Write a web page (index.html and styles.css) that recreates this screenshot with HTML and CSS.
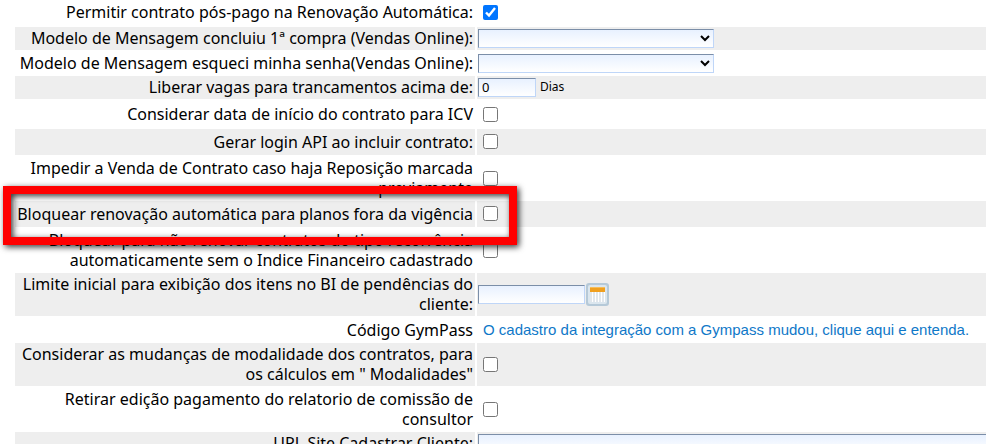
FILE: index.html
```
<!DOCTYPE html>
<html lang="pt-BR">

<head>
    <meta charset="UTF-8">
    <meta name="viewport" content="width=device-width, initial-scale=1.0">
    <title>Configurações</title>
    <link rel="stylesheet" href="styles.css">
</head>

<body>
    <form class="config-form">
        <table class="config-table">
            <tr class="check-row">
                <td class="label-cell"><label for="pos-pago">Permitir contrato pós-pago na Renovação Automática:</label></td>
                <td><input type="checkbox" id="pos-pago" checked></td>
            </tr>
            <tr>
                <td class="label-cell"><label for="modelo-compra">Modelo de Mensagem concluiu 1ª compra (Vendas Online):</label></td>
                <td><div class="field"><select id="modelo-compra"><option></option></select></div></td>
            </tr>
            <tr>
                <td class="label-cell"><label for="modelo-senha">Modelo de Mensagem esqueci minha senha(Vendas Online):</label></td>
                <td><div class="field"><select id="modelo-senha"><option></option></select></div></td>
            </tr>
            <tr>
                <td class="label-cell"><label for="vagas">Liberar vagas para trancamentos acima de:</label></td>
                <td><div class="field"><input type="text" class="input-small" id="vagas" value="0"><span class="unit">Dias</span></div></td>
            </tr>
            <tr class="check-row">
                <td class="label-cell"><label for="icv">Considerar data de início do contrato para ICV</label></td>
                <td><input type="checkbox" id="icv"></td>
            </tr>
            <tr class="check-row">
                <td class="label-cell"><label for="login-api">Gerar login API ao incluir contrato:</label></td>
                <td><input type="checkbox" id="login-api"></td>
            </tr>
            <tr>
                <td class="label-cell"><label for="impedir-venda">Impedir a Venda de Contrato caso haja Reposição marcada<br>previamente</label></td>
                <td><input type="checkbox" id="impedir-venda"></td>
            </tr>
            <tr class="check-row">
                <td class="label-cell highlight"><label for="bloquear-vigencia">Bloquear renovação automática para planos fora da vigência</label></td>
                <td><input type="checkbox" id="bloquear-vigencia"></td>
            </tr>
            <tr>
                <td class="label-cell"><label for="bloquear-indice">Bloquear para não renovar contratos do tipo recorrência<br>automaticamente sem o Indice Financeiro cadastrado</label></td>
                <td><input type="checkbox" id="bloquear-indice"></td>
            </tr>
            <tr>
                <td class="label-cell"><label for="limite-bi">Limite inicial para exibição dos itens no BI de pendências do<br>cliente:</label></td>
                <td>
                    <div class="field">
                        <input type="text" class="input-date" id="limite-bi">
                        <button type="button" class="calendar-btn" aria-label="Calendário">
                            <svg width="23" height="23" viewBox="0 0 23 23">
                                <rect width="23" height="23" rx="3" fill="#b5c9d8"/>
                                <rect x="2" y="2" width="19" height="19" rx="2" fill="#dbe6ee"/>
                                <rect x="4" y="4" width="15" height="15" fill="#fff"/>
                                <path d="M5 9v10M8 9v10M11 9v10M14 9v10M17 9v10" stroke="#c3cfda"/>
                                <rect x="4" y="4" width="15" height="5" fill="#f0a020"/>
                                <rect x="4" y="4" width="15" height="1" fill="#f6bd58"/>
                            </svg>
                        </button>
                    </div>
                </td>
            </tr>
            <tr>
                <td class="label-cell">Código GymPass</td>
                <td><a class="gympass-link" href="#">O cadastro da integração com a Gympass mudou, clique aqui e entenda.</a></td>
            </tr>
            <tr>
                <td class="label-cell"><label for="modalidades">Considerar as mudanças de modalidade dos contratos, para<br>os cálculos em " Modalidades"</label></td>
                <td><input type="checkbox" id="modalidades"></td>
            </tr>
            <tr>
                <td class="label-cell"><label for="comissao">Retirar edição pagamento do relatorio de comissão de<br>consultor</label></td>
                <td><input type="checkbox" id="comissao"></td>
            </tr>
            <tr>
                <td class="label-cell"><label for="url-site">URL Site Cadastrar Cliente:</label></td>
                <td><div class="field"><input type="text" class="input-full" id="url-site"></div></td>
            </tr>
        </table>
    </form>
</body>

</html>
```
FILE: styles.css
```
* {
    box-sizing: border-box;
}

body {
    margin: 0;
    background-color: #fff;
    color: #000;
    font-family: "Trebuchet MS", "Noto Sans", sans-serif;
    font-size: 16px;
    line-height: 20px;
}

.config-form {
    height: 100vh;
    overflow: hidden;
    padding-left: 13px;
}

.config-table {
    width: calc(100% + 4px);
    margin-top: -3px;
    table-layout: fixed;
    border-spacing: 2px;
}

.config-table td {
    padding: 1px 0;
    vertical-align: middle;
}

.config-table tr:nth-child(even) td {
    padding-bottom: 2px;
    background-color: #eee;
}

.config-table .check-row td {
    height: 26px;
}

.config-table .label-cell {
    width: 460px;
    padding-right: 2px;
    text-align: right;
    white-space: nowrap;
}

.field {
    display: flex;
    align-items: center;
    padding-left: 1px;
}

input[type="checkbox"] {
    display: block;
    width: 15px;
    height: 15px;
    margin: 0 6px;
}

input[type="text"],
select {
    height: 19px;
    padding: 0 3px;
    border: 1px solid;
    border-color: #7b8ea8 #bfd6f8 #bfd6f8 #7b8ea8;
    border-radius: 0;
    background: linear-gradient(#e8f1ff, #fff);
    color: #000;
    font-family: inherit;
    font-size: 13px;
}

select {
    width: 236px;
}

.input-small {
    width: 58px;
}

.input-date {
    width: 107px;
}

.input-full {
    width: 100%;
}

.unit {
    margin-left: 4px;
    font-size: 12px;
}

.calendar-btn {
    margin-left: 1px;
    padding: 0;
    border: none;
    background: none;
    cursor: pointer;
}

.calendar-btn svg {
    display: block;
}

.gympass-link {
    margin-left: 6px;
    color: #0f78c8;
    font-family: Arial, "Liberation Sans", sans-serif;
    font-size: 15px;
    text-decoration: none;
    white-space: nowrap;
}

/* moldura vermelha em volta da linha em destaque */
.highlight {
    position: relative;
}

.highlight::after {
    content: "";
    position: absolute;
    box-sizing: border-box;
    z-index: 1;
    top: -15px;
    left: -12px;
    width: 514px;
    height: 59px;
    border: 8px solid #f00;
    filter: drop-shadow(2px 2px 3px rgba(0, 0, 0, 0.8));
    pointer-events: none;
}
```
